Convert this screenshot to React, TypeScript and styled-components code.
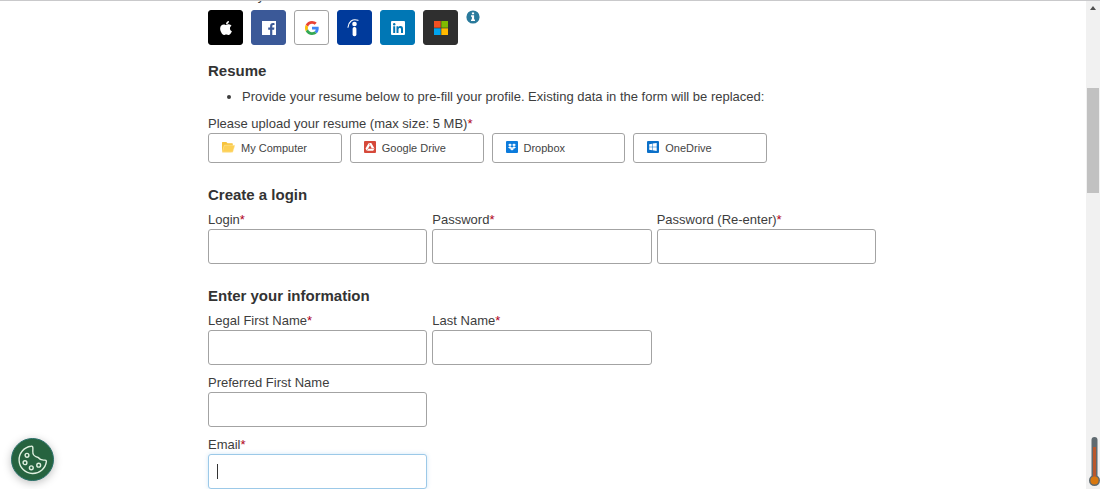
import React from "react";
import styled, { createGlobalStyle, css } from "styled-components";
import { FaApple, FaDropbox } from "react-icons/fa";

const GlobalStyle = createGlobalStyle`
  * { box-sizing: border-box; }
  body {
    margin: 0;
    overflow: hidden;
    background: #fff;
    color: #3d3d3d;
    font: 13px/18px "Liberation Sans", Arial, sans-serif;
  }
`;

const Page = styled.div`
  display: flex;
  height: 100vh;
  overflow: hidden;
  border-top: 1px solid #c9c9cb;
`;

const Main = styled.main`
  flex: 1;
  min-width: 0;
  overflow: hidden;
`;

const Form = styled.form`
  width: 100%;
  max-width: 670px;
  margin: -14px auto 0;
  padding-right: 2px;
`;

const Intro = styled.p`
  margin: 0 0 5px;
`;

const SocialRow = styled.div`
  display: flex;
  align-items: flex-start;
  gap: 8px;
`;

const SocialButton = styled.button<{ $bg: string; $border?: string }>`
  display: flex;
  align-items: center;
  justify-content: center;
  width: 35px;
  height: 35px;
  padding: 0;
  border: 1px solid ${(p) => p.$border ?? p.$bg};
  border-radius: 3px;
  background: ${(p) => p.$bg};
  color: #fff;
`;

const InfoButton = styled.button`
  width: 14px;
  height: 14px;
  padding: 0;
  border: 0;
  background: none;
  svg { display: block; }
`;

const Section = styled.section`
  margin-top: 22px;
`;

const ResumeSection = styled(Section)`
  margin-top: 16px;
`;

const Heading = styled.h2`
  margin: 0 0 6px;
  font-size: 15px;
  line-height: 20px;
  color: #333;
`;

const Notes = styled.ul`
  margin: 0 0 8px;
  padding-left: 34px;
  line-height: 20px;
`;

const Required = styled.span`
  color: #b00020;
`;

const UploadGroup = styled.div`
  display: grid;
  grid-template-columns: repeat(4, 1fr);
  gap: 8px;
  max-width: 559px;
`;

const UploadButton = styled.button`
  display: flex;
  align-items: center;
  gap: 6px;
  height: 30px;
  padding: 0 13px;
  border: 1px solid #a3a3a3;
  border-radius: 3px;
  background: #fff;
  color: #444;
  font: 11px/16px "Liberation Sans", Arial, sans-serif;
  svg { flex: none; margin-bottom: 2px; }
`;

const Fields = styled.div`
  display: grid;
  grid-template-columns: repeat(3, 1fr);
  gap: 9px 5px;
`;

const FieldBox = styled.div<{ $first?: boolean }>`
  position: relative;
  ${(p) => p.$first && css`grid-column-start: 1;`}
`;

const Label = styled.label`
  display: block;
`;

const Input = styled.input<{ $active?: boolean }>`
  display: block;
  width: 100%;
  height: 35px;
  padding: 0 9px;
  border: 1px solid #a3a3a3;
  border-radius: 3px;
  outline: 0;
  background: #fff;
  font: inherit;
  ${(p) =>
    p.$active &&
    css`
      border-color: #9cc9e8;
      box-shadow: 0 0 4px rgba(102, 175, 233, 0.3);
    `}
`;

const Caret = styled.span`
  position: absolute;
  left: 9px;
  bottom: 10px;
  width: 1px;
  height: 15px;
  background: #333;
`;

const Scrollbar = styled.div`
  display: flex;
  flex-direction: column;
  align-items: center;
  width: 14px;
  padding: 5px 1px 0;
  background: #f1f1f1;
`;

const Thumb = styled.div`
  width: 100%;
  height: 105px;
  margin-top: 78px;
  background: #c1c1c1;
`;

const CookieButton = styled.button`
  position: fixed;
  left: 11px;
  bottom: 8px;
  width: 43px;
  height: 43px;
  padding: 0;
  border: 1px solid #29706a;
  border-radius: 50%;
  background: #26633f;
  box-shadow: 0 2px 8px rgba(0, 0, 0, 0.25);
  svg { display: block; margin: auto; }
`;

const Thermometer = styled.svg`
  position: fixed;
  right: 0;
  bottom: 2px;
`;

type FieldProps = {
  id: string;
  label: string;
  type?: string;
  required?: boolean;
  first?: boolean;
  active?: boolean;
};

function Field({ id, label, type = "text", required, first, active }: FieldProps) {
  return (
    <FieldBox $first={first}>
      <Label htmlFor={id}>
        {label}
        {required && <Required>*</Required>}
      </Label>
      <Input id={id} type={type} $active={active} />
      {active && <Caret />}
    </FieldBox>
  );
}

const FacebookIcon = () => (
  <svg width="14" height="14" viewBox="0 0 14 14">
    <path fill="#fff" d="M0 0h14v14h-3.7V8.7h1.8l.3-2.1h-2.1V5.2c0-.7.3-1.1 1.1-1.1h1.1V2.2c-.3-.1-.9-.1-1.5-.1-1.8 0-2.9 1-2.9 2.9v1.6H6.2v2.1h1.9V14H0z" />
  </svg>
);

const GoogleIcon = () => (
  <svg width="14" height="14" viewBox="0 0 48 48">
    <path fill="#EA4335" d="M24 9.5c3.54 0 6.71 1.22 9.21 3.6l6.85-6.85C35.9 2.38 30.47 0 24 0 14.62 0 6.51 5.38 2.56 13.22l7.98 6.19C12.43 13.72 17.74 9.5 24 9.5z" />
    <path fill="#4285F4" d="M46.98 24.55c0-1.57-.15-3.09-.38-4.55H24v9.02h12.94c-.58 2.96-2.26 5.48-4.78 7.18l7.73 6c4.51-4.18 7.09-10.36 7.09-17.65z" />
    <path fill="#FBBC05" d="M10.53 28.59c-.48-1.45-.76-2.99-.76-4.59s.27-3.14.76-4.59l-7.98-6.19C.92 16.46 0 20.12 0 24s.92 7.54 2.56 10.78l7.97-6.19z" />
    <path fill="#34A853" d="M24 48c6.48 0 11.93-2.13 15.89-5.81l-7.73-6c-2.15 1.45-4.92 2.3-8.16 2.3-6.26 0-11.57-4.22-13.47-9.91l-7.98 6.19C6.51 42.62 14.62 48 24 48z" />
  </svg>
);

const IndeedIcon = () => (
  <svg width="15" height="20" viewBox="0 0 15 20">
    <path fill="none" stroke="#fff" strokeWidth="1.1" strokeLinecap="round" d="M1 9.300C1.500 3.800 5.500.3 11 2.300" />
    <circle cx="7.500" cy="6" r="2.300" fill="#fff" />
    <rect x="5.600" y="9" width="3.800" height="9.300" rx="1.700" fill="#fff" />
  </svg>
);

const LinkedInIcon = () => (
  <svg width="14" height="14" viewBox="0 0 14 14">
    <rect width="14" height="14" rx="1" fill="#fff" />
    <g fill="#0077b5">
      <circle cx="3.200" cy="3.300" r="1.200" />
      <path d="M2.200 5.300h2V12h-2zM5.500 5.300h1.900v.9c.4-.7 1.200-1.100 2.100-1.100 1.900 0 2.500 1.200 2.500 3.100V12h-2V8.600c0-1-.2-1.700-1.100-1.700-1 0-1.400.7-1.400 1.700V12h-2z" />
    </g>
  </svg>
);

const MicrosoftIcon = () => (
  <svg width="14" height="14" viewBox="0 0 14 14">
    <path fill="#f25022" d="M0 0h6.700v6.700H0z" />
    <path fill="#7fba00" d="M7.300 0H14v6.700H7.300z" />
    <path fill="#00a4ef" d="M0 7.300h6.700V14H0z" />
    <path fill="#ffb900" d="M7.300 7.300H14V14H7.300z" />
  </svg>
);

const InfoIcon = () => (
  <svg width="14" height="14" viewBox="0 0 14 14">
    <circle cx="7" cy="7" r="6.600" fill="#2a7a9c" />
    <path fill="#fff" d="M5.900 2.400h2.200v1.900H5.900zM5 5.300h3.100v4.300H9v1.500H5V9.600h.9V6.800H5z" />
  </svg>
);

const FolderIcon = () => (
  <svg width="13" height="12" viewBox="0 0 13 12">
    <path fill="#f7c33c" d="M0 1.500Q0 1 .6 1h3.700l1.200 1.300h4.700q.6 0 .6.600V5L9.500 11.200H.6Q0 11.200 0 10.600z" />
    <path fill="#fdd055" stroke="#fff3cf" strokeWidth=".4" d="M2.300 4.200H13L10.800 11.200H.2z" />
  </svg>
);

const DriveIcon = () => (
  <svg width="12" height="12" viewBox="0 0 12 12">
    <rect width="12" height="12" rx="1" fill="#d6493a" />
    <path fill="#fff" fillRule="evenodd" d="M4.700 2h2.600L10.500 7.500 9.200 9.800H2.800L1.500 7.500zM6 4.300 4 7.700h4z" />
    <path stroke="#d6493a" strokeWidth=".5" d="M4.700 2 6 4.300M10.500 7.500H8M2.800 9.800 4 7.700" />
  </svg>
);

const DropboxIcon = () => (
  <svg width="12" height="12" viewBox="0 0 12 12">
    <rect width="12" height="12" rx="1" fill="#0b7bdc" />
    <FaDropbox x="2" y="2" size={8} color="#fff" />
  </svg>
);

const OneDriveIcon = () => (
  <svg width="12" height="12" viewBox="0 0 12 12">
    <rect width="12" height="12" rx="1" fill="#0b70c9" />
    <path fill="#fff" d="M2.200 3.200 5.200 2.700v3H2.200zM5.700 2.600 9.700 2v3.700h-4zM2.200 6.200h3v3l-3-.5zM5.700 6.200h4V10l-4-.7z" />
  </svg>
);

const CookieIcon = () => (
  <svg width="30" height="30" viewBox="0 0 30 30" fill="none" stroke="#dff0df" strokeWidth="1.400" strokeLinejoin="round">
    <path d="M13 1.200A13.700 13.700 0 1 0 28.400 16.400C28.400 15.400 27.600 15 26.600 15.100C24 15.400 21.800 14.700 20.200 12.500C17 12 14.400 9.500 14.800 6.200C14.900 4.600 15 3.500 14.800 2.400C14.600 1.400 14 1 13 1.200z" />
    <circle cx="9" cy="10.300" r="1.900" />
    <circle cx="7" cy="17.700" r="1.900" />
    <circle cx="13.300" cy="22.800" r="1.900" />
    <circle cx="20.700" cy="20.200" r="1.900" />
  </svg>
);

export default function App() {
  return (
    <>
      <GlobalStyle />
      <Page>
        <Main>
          <Form onSubmit={(e) => e.preventDefault()}>
            <Intro>Autofill by</Intro>
            <SocialRow>
              <SocialButton type="button" aria-label="Apple" $bg="#000"><FaApple size={16} /></SocialButton>
              <SocialButton type="button" aria-label="Facebook" $bg="#3b5998"><FacebookIcon /></SocialButton>
              <SocialButton type="button" aria-label="Google" $bg="#fff" $border="#a3a3a3"><GoogleIcon /></SocialButton>
              <SocialButton type="button" aria-label="Indeed" $bg="#003a9b"><IndeedIcon /></SocialButton>
              <SocialButton type="button" aria-label="LinkedIn" $bg="#0077b5"><LinkedInIcon /></SocialButton>
              <SocialButton type="button" aria-label="Microsoft" $bg="#2f2f2f"><MicrosoftIcon /></SocialButton>
              <InfoButton type="button" aria-label="More information"><InfoIcon /></InfoButton>
            </SocialRow>

            <ResumeSection>
              <Heading>Resume</Heading>
              <Notes>
                <li>Provide your resume below to pre-fill your profile. Existing data in the form will be replaced:</li>
              </Notes>
              <div id="upload-label">
                Please upload your resume (max size: 5 MB)<Required>*</Required>
              </div>
              <UploadGroup role="group" aria-labelledby="upload-label">
                <UploadButton type="button"><FolderIcon />My Computer</UploadButton>
                <UploadButton type="button"><DriveIcon />Google Drive</UploadButton>
                <UploadButton type="button"><DropboxIcon />Dropbox</UploadButton>
                <UploadButton type="button"><OneDriveIcon />OneDrive</UploadButton>
              </UploadGroup>
            </ResumeSection>

            <Section>
              <Heading>Create a login</Heading>
              <Fields>
                <Field id="login" label="Login" required />
                <Field id="password" label="Password" type="password" required />
                <Field id="password2" label="Password (Re-enter)" type="password" required />
              </Fields>
            </Section>

            <Section>
              <Heading>Enter your information</Heading>
              <Fields>
                <Field id="first" label="Legal First Name" required />
                <Field id="last" label="Last Name" required />
                <Field id="preferred" label="Preferred First Name" first />
                <Field id="email" label="Email" type="email" required first active />
              </Fields>
            </Section>
          </Form>
        </Main>
        <Scrollbar aria-hidden="true">
          <svg width="6" height="4" viewBox="0 0 6 4"><path fill="#505050" d="M3 0l3 4H0z" /></svg>
          <Thumb />
        </Scrollbar>
      </Page>
      <CookieButton type="button" aria-label="Cookie settings"><CookieIcon /></CookieButton>
      <Thermometer width="11" height="50" viewBox="0 0 11 50" aria-hidden="true">
        <rect x="2.500" y="0" width="6" height="44" rx="3" fill="#5f6a70" />
        <circle cx="5.500" cy="43.500" r="5.500" fill="#5f6a70" />
        <rect x="4" y="10" width="3" height="32" fill="#b9572c" />
        <circle cx="5.500" cy="43.500" r="4" fill="#d9780f" />
      </Thermometer>
    </>
  );
}
